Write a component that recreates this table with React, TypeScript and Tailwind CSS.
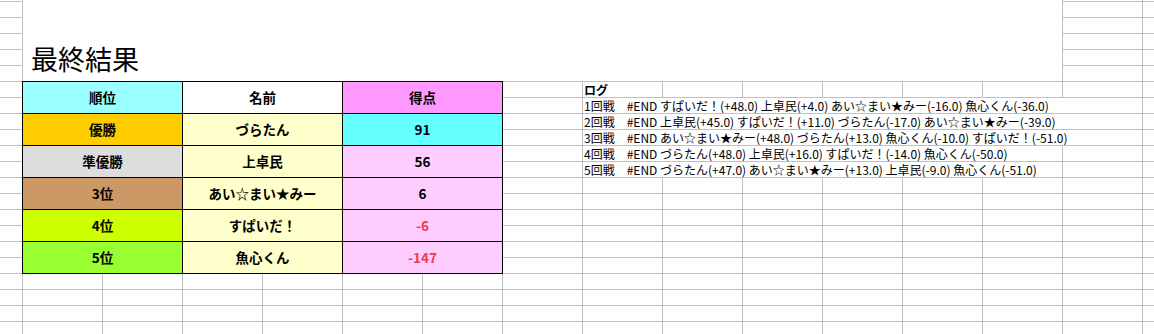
const jp = "font-['Noto_Sans_CJK_JP','Noto_Sans',sans-serif]";

type Row = {
  rank: string;
  rankBg: string;
  name: string;
  score: string;
  scoreBg: string;
  scoreText: string;
};

const rows: Row[] = [
  { rank: "優勝", rankBg: "bg-[#ffcc00]", name: "づらたん", score: "91", scoreBg: "bg-[#66ffff]", scoreText: "text-black" },
  { rank: "準優勝", rankBg: "bg-[#dddddd]", name: "上卓民", score: "56", scoreBg: "bg-[#ffccff]", scoreText: "text-black" },
  { rank: "3位", rankBg: "bg-[#cc9966]", name: "あい☆まい★みー", score: "6", scoreBg: "bg-[#ffccff]", scoreText: "text-black" },
  { rank: "4位", rankBg: "bg-[#ccff00]", name: "すぱいだ！", score: "-6", scoreBg: "bg-[#ffccff]", scoreText: "text-[#f03a44]" },
  { rank: "5位", rankBg: "bg-[#99ff33]", name: "魚心くん", score: "-147", scoreBg: "bg-[#ffccff]", scoreText: "text-[#f03a44]" },
];

// span: how far the overflowing text hides the grid lines
const logs = [
  { text: "1回戦　#END すぱいだ！(+48.0) 上卓民(+4.0) あい☆まい★みー(-16.0) 魚心くん(-36.0)", span: "col-[9/16]", row: "row-[8/9]" },
  { text: "2回戦　#END 上卓民(+45.0) すぱいだ！(+11.0) づらたん(-17.0) あい☆まい★みー(-39.0)", span: "col-[9/16]", row: "row-[9/10]" },
  { text: "3回戦　#END あい☆まい★みー(+48.0) づらたん(+13.0) 魚心くん(-10.0) すぱいだ！(-51.0)", span: "col-[9/16]", row: "row-[10/11]" },
  { text: "4回戦　#END づらたん(+48.0) 上卓民(+16.0) すぱいだ！(-14.0) 魚心くん(-50.0)", span: "col-[9/15]", row: "row-[11/12]" },
  { text: "5回戦　#END づらたん(+47.0) あい☆まい★みー(+13.0) 上卓民(-9.0) 魚心くん(-51.0)", span: "col-[9/15]", row: "row-[12/13]" },
];

function Cell({ bg, className = "", children }: { bg: string; className?: string; children: React.ReactNode }) {
  return (
    <div className={`flex items-center justify-center border-r border-b border-black ${bg} ${className}`}>
      {children}
    </div>
  );
}

function ResultTable() {
  return (
    <div
      className={`col-[2/8] row-[7/19] -mr-px -mb-px grid grid-cols-3 grid-rows-6 border-t border-l border-black text-[13.5px] font-bold text-black ${jp}`}
    >
      <Cell bg="bg-[#99ffff]">順位</Cell>
      <Cell bg="bg-white">名前</Cell>
      <Cell bg="bg-[#ff99ff]">得点</Cell>
      {rows.map((r) => (
        <div key={r.rank} className="contents">
          <Cell bg={r.rankBg}>{r.rank}</Cell>
          <Cell bg="bg-[#ffffcc]">{r.name}</Cell>
          <Cell bg={r.scoreBg} className={r.scoreText}>
            {r.score}
          </Cell>
        </div>
      ))}
    </div>
  );
}

export default function App() {
  return (
    <div className="grid h-[334px] w-[1154px] grid-cols-[22px_repeat(14,80px)_1fr] grid-rows-[1px_repeat(21,16px)] overflow-hidden bg-white bg-[linear-gradient(to_right,#c0c0c0_1px,transparent_1px),linear-gradient(to_bottom,#c0c0c0_1px,transparent_1px)] bg-[length:80px_16px] bg-[position:22px_1px]">
      <div className={`col-[2/15] row-[1/7] ml-px flex items-end bg-white pb-[9px] pl-[8px] ${jp}`}>
        <h1 className="text-[27px] leading-[27px] font-normal text-black">最終結果</h1>
      </div>

      <ResultTable />

      <div className={`col-[9/10] row-[7/8] mt-px ml-px pl-px text-[12px] leading-[15px] font-bold text-black ${jp}`}>
        ログ
      </div>
      {logs.map((l) => (
        <div
          key={l.text}
          className={`${l.span} ${l.row} mt-px ml-px bg-white pl-px text-[12px] leading-[15px] whitespace-nowrap text-black ${jp}`}
        >
          {l.text}
        </div>
      ))}
    </div>
  );
}
